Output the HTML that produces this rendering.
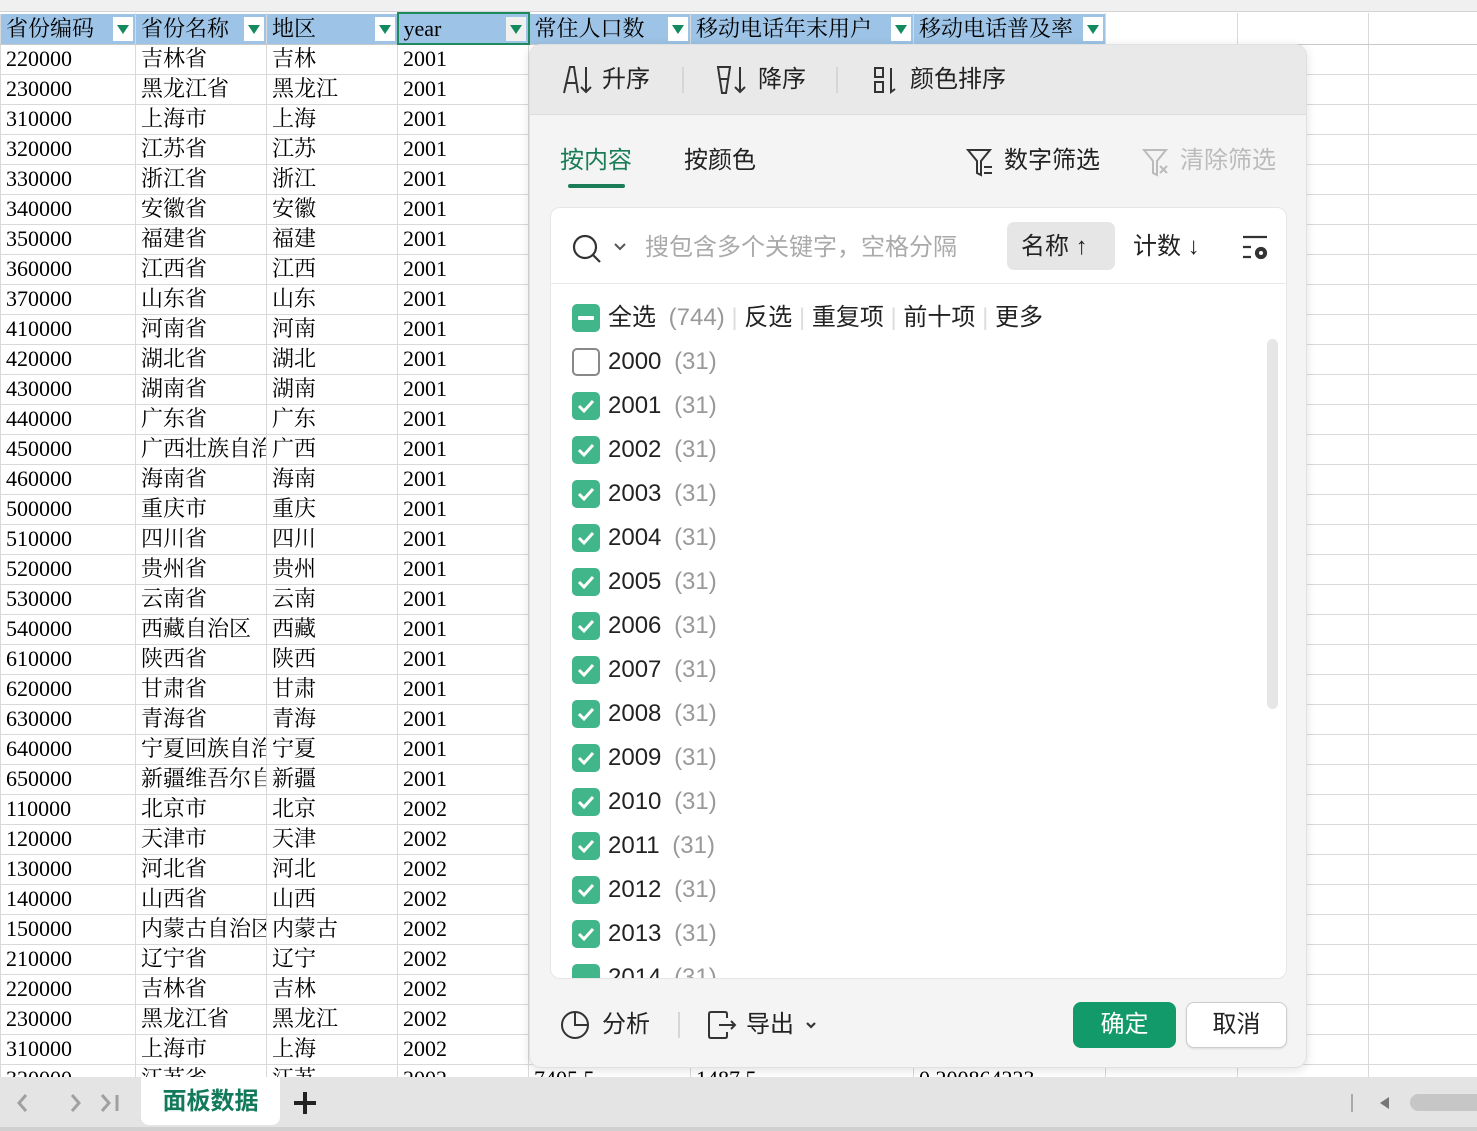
<!DOCTYPE html>
<html><head><meta charset="utf-8">
<style>
*{margin:0;padding:0;box-sizing:border-box}
body{width:1477px;height:1131px;overflow:hidden;background:#fff;position:relative;font-family:"Liberation Serif","Noto Serif CJK SC",serif}
.colhdr{position:absolute;left:0;top:0;width:1477px;height:12px;background:#f0f0f0;border-bottom:1px solid #d4d4d4}
table{position:absolute;left:0;top:12px;width:1477px;border-collapse:collapse;table-layout:fixed}
td{height:30px;border:1px solid #d9d9d9;font-size:22px;line-height:28px;padding:0 0 0 5px;white-space:nowrap;overflow:hidden;color:#000;vertical-align:middle}
tr.h td{background:#9dc3e6;position:relative;padding-right:26px;border-color:#fff #d9d9d9 #c9c9c9 #d9d9d9;height:31px}
tr.h td.e{background:#fff}
.dd{position:absolute;right:2px;top:3px;width:20px;height:24px;background:#fff}
.dd:after{content:"";position:absolute;left:4px;top:8px;border-left:6px solid transparent;border-right:6px solid transparent;border-top:9px solid #138a5e}
.pop{position:absolute;left:529px;top:44px;width:778px;height:1024px;background:#f4f4f4;border:1px solid #e0e0e0;border-radius:12px;box-shadow:0 2px 10px rgba(0,0,0,.12);font-family:"Liberation Sans","Noto Sans CJK SC",sans-serif;color:#222;overflow:hidden}
.sortbar{position:absolute;left:0;top:0;width:100%;height:70px;background:#e9e9e9;border-bottom:1px solid #ddd}
.t{position:absolute;font-size:24px;line-height:30px;white-space:nowrap}
.sep{position:absolute;width:2px;height:26px;background:#d6d6d6}
.panel{position:absolute;left:20px;top:162px;width:737px;height:772px;background:#fff;border:1px solid #e6e6e6;border-radius:10px;overflow:hidden}
.cb{position:absolute;left:21px;width:28px;height:28px;border-radius:5px;background:#40b68a}
.cb svg{position:absolute;left:5px;top:6px}
.cnt{color:#999;margin-left:6px}
.tabs{position:absolute;left:0;top:1077px;width:1477px;height:54px;background:#e4e4e4;border-bottom:4px solid #d0d0d0;font-family:"Liberation Sans","Noto Sans CJK SC",sans-serif}
</style></head><body>
<div class="colhdr"></div>
<table>
<colgroup><col style="width:135px"><col style="width:131px"><col style="width:131px"><col style="width:131px"><col style="width:162px"><col style="width:223px"><col style="width:192px"><col style="width:132px"><col style="width:131px"><col style="width:109px"></colgroup>
<tr class="h"><td>省份编码<span class="dd"></span></td><td>省份名称<span class="dd"></span></td><td>地区<span class="dd"></span></td><td style="border:2px solid #1e8a5e">year<span class="dd" style="background:#f0f0f0"></span></td><td>常住人口数<span class="dd"></span></td><td>移动电话年末用户<span class="dd"></span></td><td>移动电话普及率<span class="dd"></span></td><td class="e"></td><td class="e"></td><td class="e"></td></tr>
<tr><td>220000</td><td>吉林省</td><td>吉林</td><td>2001</td><td></td><td></td><td></td><td></td><td></td><td></td></tr>
<tr><td>230000</td><td>黑龙江省</td><td>黑龙江</td><td>2001</td><td></td><td></td><td></td><td></td><td></td><td></td></tr>
<tr><td>310000</td><td>上海市</td><td>上海</td><td>2001</td><td></td><td></td><td></td><td></td><td></td><td></td></tr>
<tr><td>320000</td><td>江苏省</td><td>江苏</td><td>2001</td><td></td><td></td><td></td><td></td><td></td><td></td></tr>
<tr><td>330000</td><td>浙江省</td><td>浙江</td><td>2001</td><td></td><td></td><td></td><td></td><td></td><td></td></tr>
<tr><td>340000</td><td>安徽省</td><td>安徽</td><td>2001</td><td></td><td></td><td></td><td></td><td></td><td></td></tr>
<tr><td>350000</td><td>福建省</td><td>福建</td><td>2001</td><td></td><td></td><td></td><td></td><td></td><td></td></tr>
<tr><td>360000</td><td>江西省</td><td>江西</td><td>2001</td><td></td><td></td><td></td><td></td><td></td><td></td></tr>
<tr><td>370000</td><td>山东省</td><td>山东</td><td>2001</td><td></td><td></td><td></td><td></td><td></td><td></td></tr>
<tr><td>410000</td><td>河南省</td><td>河南</td><td>2001</td><td></td><td></td><td></td><td></td><td></td><td></td></tr>
<tr><td>420000</td><td>湖北省</td><td>湖北</td><td>2001</td><td></td><td></td><td></td><td></td><td></td><td></td></tr>
<tr><td>430000</td><td>湖南省</td><td>湖南</td><td>2001</td><td></td><td></td><td></td><td></td><td></td><td></td></tr>
<tr><td>440000</td><td>广东省</td><td>广东</td><td>2001</td><td></td><td></td><td></td><td></td><td></td><td></td></tr>
<tr><td>450000</td><td>广西壮族自治区</td><td>广西</td><td>2001</td><td></td><td></td><td></td><td></td><td></td><td></td></tr>
<tr><td>460000</td><td>海南省</td><td>海南</td><td>2001</td><td></td><td></td><td></td><td></td><td></td><td></td></tr>
<tr><td>500000</td><td>重庆市</td><td>重庆</td><td>2001</td><td></td><td></td><td></td><td></td><td></td><td></td></tr>
<tr><td>510000</td><td>四川省</td><td>四川</td><td>2001</td><td></td><td></td><td></td><td></td><td></td><td></td></tr>
<tr><td>520000</td><td>贵州省</td><td>贵州</td><td>2001</td><td></td><td></td><td></td><td></td><td></td><td></td></tr>
<tr><td>530000</td><td>云南省</td><td>云南</td><td>2001</td><td></td><td></td><td></td><td></td><td></td><td></td></tr>
<tr><td>540000</td><td>西藏自治区</td><td>西藏</td><td>2001</td><td></td><td></td><td></td><td></td><td></td><td></td></tr>
<tr><td>610000</td><td>陕西省</td><td>陕西</td><td>2001</td><td></td><td></td><td></td><td></td><td></td><td></td></tr>
<tr><td>620000</td><td>甘肃省</td><td>甘肃</td><td>2001</td><td></td><td></td><td></td><td></td><td></td><td></td></tr>
<tr><td>630000</td><td>青海省</td><td>青海</td><td>2001</td><td></td><td></td><td></td><td></td><td></td><td></td></tr>
<tr><td>640000</td><td>宁夏回族自治区</td><td>宁夏</td><td>2001</td><td></td><td></td><td></td><td></td><td></td><td></td></tr>
<tr><td>650000</td><td>新疆维吾尔自治区</td><td>新疆</td><td>2001</td><td></td><td></td><td></td><td></td><td></td><td></td></tr>
<tr><td>110000</td><td>北京市</td><td>北京</td><td>2002</td><td></td><td></td><td></td><td></td><td></td><td></td></tr>
<tr><td>120000</td><td>天津市</td><td>天津</td><td>2002</td><td></td><td></td><td></td><td></td><td></td><td></td></tr>
<tr><td>130000</td><td>河北省</td><td>河北</td><td>2002</td><td></td><td></td><td></td><td></td><td></td><td></td></tr>
<tr><td>140000</td><td>山西省</td><td>山西</td><td>2002</td><td></td><td></td><td></td><td></td><td></td><td></td></tr>
<tr><td>150000</td><td>内蒙古自治区</td><td>内蒙古</td><td>2002</td><td></td><td></td><td></td><td></td><td></td><td></td></tr>
<tr><td>210000</td><td>辽宁省</td><td>辽宁</td><td>2002</td><td></td><td></td><td></td><td></td><td></td><td></td></tr>
<tr><td>220000</td><td>吉林省</td><td>吉林</td><td>2002</td><td></td><td></td><td></td><td></td><td></td><td></td></tr>
<tr><td>230000</td><td>黑龙江省</td><td>黑龙江</td><td>2002</td><td></td><td></td><td></td><td></td><td></td><td></td></tr>
<tr><td>310000</td><td>上海市</td><td>上海</td><td>2002</td><td></td><td></td><td></td><td></td><td></td><td></td></tr>
<tr><td>320000</td><td>江苏省</td><td>江苏</td><td>2002</td><td>7405.5</td><td>1487.5</td><td>0.200864223</td><td></td><td></td><td></td></tr>
</table>

<div class="pop">
 <div class="sortbar">
  <svg style="position:absolute;left:32px;top:20px" width="34" height="30" viewBox="0 0 34 30" fill="none" stroke="#333" stroke-width="2"><path d="M2 28 L8 2 L12 2 L16 28 M4 18 L14 18"/><path d="M24 2 V27 M19 22 L24 27 L29 22"/></svg>
  <div class="t" style="left:72px;top:20px">升序</div>
  <div class="sep" style="left:152px;top:22px"></div>
  <svg style="position:absolute;left:186px;top:20px" width="34" height="30" viewBox="0 0 34 30" fill="none" stroke="#333" stroke-width="2"><path d="M2 2 L14 2 L10 28 L6 28 Z M4 14 L12 14"/><path d="M24 2 V27 M19 22 L24 27 L29 22"/></svg>
  <div class="t" style="left:228px;top:20px">降序</div>
  <div class="sep" style="left:306px;top:22px"></div>
  <svg style="position:absolute;left:342px;top:20px" width="30" height="30" viewBox="0 0 30 30" fill="none" stroke="#333" stroke-width="2"><rect x="3" y="3" width="8" height="9"/><rect x="3" y="17" width="8" height="10"/><path d="M19 3 V27 L23 24"/></svg>
  <div class="t" style="left:380px;top:20px">颜色排序</div>
 </div>
 <div class="t" style="left:30px;top:101px;color:#1a7d58">按内容</div>
 <div style="position:absolute;left:38px;top:139px;width:57px;height:4px;border-radius:2px;background:#1a7d58"></div>
 <div class="t" style="left:154px;top:101px">按颜色</div>
 <svg style="position:absolute;left:436px;top:102px" width="30" height="30" viewBox="0 0 30 30" fill="none" stroke="#333" stroke-width="2"><path d="M2 3 H24 L15 14 V28 L11 26 V14 Z"/><path d="M18 20 H26 M18 26 H26"/></svg>
 <div class="t" style="left:474px;top:101px">数字筛选</div>
 <svg style="position:absolute;left:612px;top:102px" width="30" height="30" viewBox="0 0 30 30" fill="none" stroke="#bbb" stroke-width="2"><path d="M2 3 H24 L15 14 V28 L11 26 V14 Z"/><path d="M18 19 L25 26 M25 19 L18 26"/></svg>
 <div class="t" style="left:650px;top:101px;color:#bbb">清除筛选</div>

 <div class="panel">
  <svg style="position:absolute;left:20px;top:25px" width="32" height="32" viewBox="0 0 32 32" fill="none" stroke="#333" stroke-width="2.2"><circle cx="14" cy="14" r="11"/><path d="M22 22 L29 29"/></svg>
  <svg style="position:absolute;left:62px;top:34px" width="14" height="10" viewBox="0 0 14 10" fill="none" stroke="#555" stroke-width="2"><path d="M2 2 L7 7 L12 2"/></svg>
  <div class="t" style="left:94px;top:25px;color:#aaa">搜包含多个关键字，空格分隔</div>
  <div style="position:absolute;left:456px;top:14px;width:108px;height:48px;background:#e6e6e6;border-radius:7px"></div>
  <div class="t" style="left:470px;top:24px">名称 ↑</div>
  <div class="t" style="left:582px;top:24px">计数 ↓</div>
  <svg style="position:absolute;left:690px;top:26px" width="30" height="28" viewBox="0 0 30 28" fill="none" stroke="#333" stroke-width="2.2"><path d="M2 3 H26 M2 13 H10 M2 23 H10"/><circle cx="20" cy="19" r="5" fill="#333"/><circle cx="20" cy="19" r="2" fill="#fff" stroke="none"/></svg>
  <div style="position:absolute;left:0;top:75px;width:100%;height:1px;background:#e8e8e8"></div>
  <div class="cb" style="top:96px"><div style="position:absolute;left:6px;top:12px;width:16px;height:4px;background:#fff;border-radius:1px"></div></div>
  <div class="t" style="left:57px;top:95px">全选 <span class="cnt">(744)</span> <span style="color:#ddd">|</span> 反选 <span style="color:#ddd">|</span> 重复项 <span style="color:#ddd">|</span> 前十项 <span style="color:#ddd">|</span> 更多</div>
  <div style="position:absolute;left:716px;top:131px;width:11px;height:370px;background:#e6e6e6;border-radius:6px"></div>
  <div class="cb" style="top:140px;background:#fff;border:2px solid #888"></div><div class="t" style="left:57px;top:139px">2000 <span class="cnt">(31)</span></div>
  <div class="cb" style="top:184px"><svg width="18" height="16" viewBox="0 0 18 16" fill="none" stroke="#fff" stroke-width="3"><path d="M2 8 L7 13 L16 3"/></svg></div><div class="t" style="left:57px;top:183px">2001 <span class="cnt">(31)</span></div>
  <div class="cb" style="top:228px"><svg width="18" height="16" viewBox="0 0 18 16" fill="none" stroke="#fff" stroke-width="3"><path d="M2 8 L7 13 L16 3"/></svg></div><div class="t" style="left:57px;top:227px">2002 <span class="cnt">(31)</span></div>
  <div class="cb" style="top:272px"><svg width="18" height="16" viewBox="0 0 18 16" fill="none" stroke="#fff" stroke-width="3"><path d="M2 8 L7 13 L16 3"/></svg></div><div class="t" style="left:57px;top:271px">2003 <span class="cnt">(31)</span></div>
  <div class="cb" style="top:316px"><svg width="18" height="16" viewBox="0 0 18 16" fill="none" stroke="#fff" stroke-width="3"><path d="M2 8 L7 13 L16 3"/></svg></div><div class="t" style="left:57px;top:315px">2004 <span class="cnt">(31)</span></div>
  <div class="cb" style="top:360px"><svg width="18" height="16" viewBox="0 0 18 16" fill="none" stroke="#fff" stroke-width="3"><path d="M2 8 L7 13 L16 3"/></svg></div><div class="t" style="left:57px;top:359px">2005 <span class="cnt">(31)</span></div>
  <div class="cb" style="top:404px"><svg width="18" height="16" viewBox="0 0 18 16" fill="none" stroke="#fff" stroke-width="3"><path d="M2 8 L7 13 L16 3"/></svg></div><div class="t" style="left:57px;top:403px">2006 <span class="cnt">(31)</span></div>
  <div class="cb" style="top:448px"><svg width="18" height="16" viewBox="0 0 18 16" fill="none" stroke="#fff" stroke-width="3"><path d="M2 8 L7 13 L16 3"/></svg></div><div class="t" style="left:57px;top:447px">2007 <span class="cnt">(31)</span></div>
  <div class="cb" style="top:492px"><svg width="18" height="16" viewBox="0 0 18 16" fill="none" stroke="#fff" stroke-width="3"><path d="M2 8 L7 13 L16 3"/></svg></div><div class="t" style="left:57px;top:491px">2008 <span class="cnt">(31)</span></div>
  <div class="cb" style="top:536px"><svg width="18" height="16" viewBox="0 0 18 16" fill="none" stroke="#fff" stroke-width="3"><path d="M2 8 L7 13 L16 3"/></svg></div><div class="t" style="left:57px;top:535px">2009 <span class="cnt">(31)</span></div>
  <div class="cb" style="top:580px"><svg width="18" height="16" viewBox="0 0 18 16" fill="none" stroke="#fff" stroke-width="3"><path d="M2 8 L7 13 L16 3"/></svg></div><div class="t" style="left:57px;top:579px">2010 <span class="cnt">(31)</span></div>
  <div class="cb" style="top:624px"><svg width="18" height="16" viewBox="0 0 18 16" fill="none" stroke="#fff" stroke-width="3"><path d="M2 8 L7 13 L16 3"/></svg></div><div class="t" style="left:57px;top:623px">2011 <span class="cnt">(31)</span></div>
  <div class="cb" style="top:668px"><svg width="18" height="16" viewBox="0 0 18 16" fill="none" stroke="#fff" stroke-width="3"><path d="M2 8 L7 13 L16 3"/></svg></div><div class="t" style="left:57px;top:667px">2012 <span class="cnt">(31)</span></div>
  <div class="cb" style="top:712px"><svg width="18" height="16" viewBox="0 0 18 16" fill="none" stroke="#fff" stroke-width="3"><path d="M2 8 L7 13 L16 3"/></svg></div><div class="t" style="left:57px;top:711px">2013 <span class="cnt">(31)</span></div>
  <div class="cb" style="top:756px"></div><div class="t" style="left:57px;top:755px">2014 <span class="cnt">(31)</span></div>
 </div>

 <svg style="position:absolute;left:30px;top:965px" width="30" height="30" viewBox="0 0 30 30" fill="none" stroke="#333" stroke-width="2"><circle cx="15" cy="15" r="13"/><path d="M15 2 V15 H28"/></svg>
 <div class="t" style="left:72px;top:965px">分析</div>
 <div class="sep" style="left:148px;top:967px"></div>
 <svg style="position:absolute;left:177px;top:965px" width="32" height="30" viewBox="0 0 32 30" fill="none" stroke="#333" stroke-width="2"><path d="M20 8 V4 Q20 2 18 2 H4 Q2 2 2 4 V26 Q2 28 4 28 H18 Q20 28 20 26 V22"/><path d="M12 15 H28 M24 11 L28 15 L24 19"/></svg>
 <div class="t" style="left:216px;top:965px">导出</div>
 <svg style="position:absolute;left:274px;top:976px" width="14" height="10" viewBox="0 0 14 10" fill="none" stroke="#333" stroke-width="2.2"><path d="M3 2 L7 6 L11 2"/></svg>
 <div style="position:absolute;left:543px;top:957px;width:103px;height:46px;border-radius:8px;background:#139a6a;color:#fff;font-size:24px;line-height:46px;text-align:center">确定</div>
 <div style="position:absolute;left:656px;top:957px;width:101px;height:46px;border-radius:8px;background:#fff;border:1px solid #ccc;box-shadow:0 1px 2px rgba(0,0,0,.1);font-size:24px;line-height:44px;text-align:center">取消</div>
</div>

<div class="tabs">
 <svg style="position:absolute;left:14px;top:15px" width="110" height="22" viewBox="0 0 110 22" fill="none" stroke="#a0a0a0" stroke-width="3"><path d="M12 3 L5 11 L12 19"/><path d="M58 3 L65 11 L58 19"/><path d="M88 3 L95 11 L88 19 M103 3 V19"/></svg>
 <div style="position:absolute;left:141px;top:0;width:139px;height:48px;background:#fff;border-radius:0 0 8px 8px;color:#127a5a;font-weight:bold;font-size:24px;line-height:50px;text-align:center">面板数据</div>
 <div style="position:absolute;left:294px;top:24px;width:22px;height:4px;background:#222"></div>
 <div style="position:absolute;left:303px;top:15px;width:4px;height:22px;background:#222"></div>
 <div style="position:absolute;left:1351px;top:17px;width:2px;height:18px;background:#aaa"></div>
 <div style="position:absolute;left:1380px;top:20px;border-top:6px solid transparent;border-bottom:6px solid transparent;border-right:9px solid #777"></div>
 <div style="position:absolute;left:1410px;top:17px;width:80px;height:17px;border-radius:9px;background:#c6c6c6"></div>
</div>
</body></html>
